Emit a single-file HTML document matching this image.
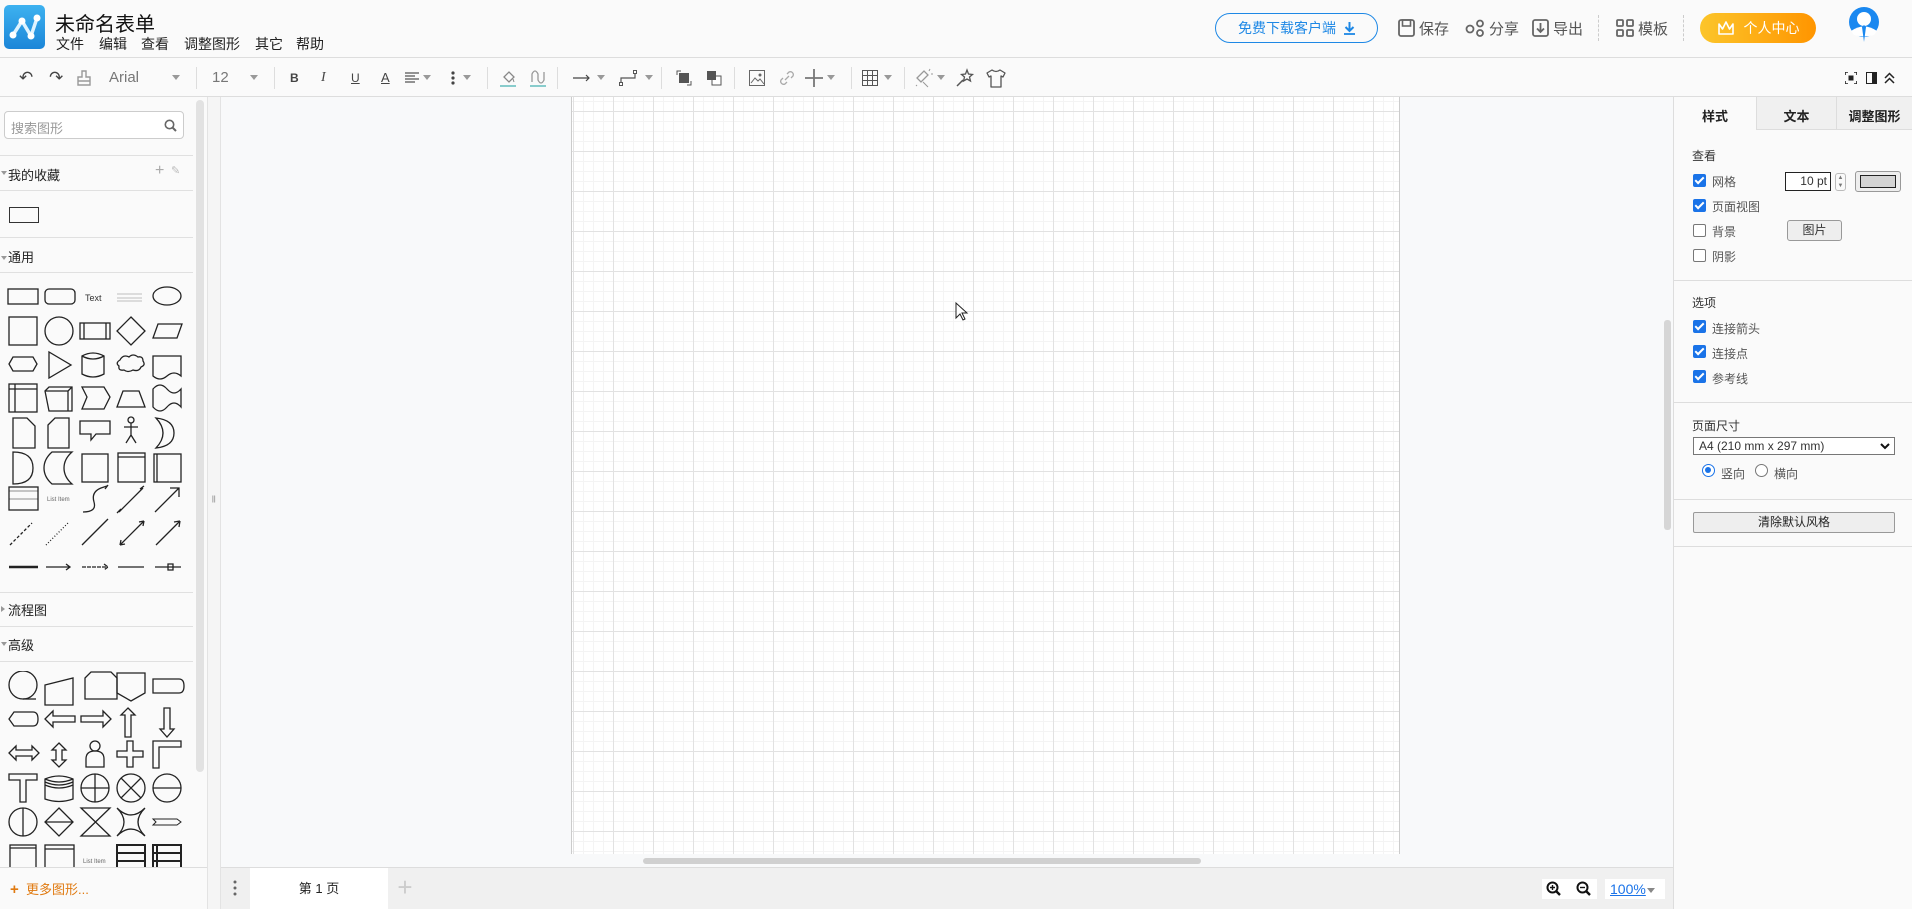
<!DOCTYPE html>
<html><head><meta charset="utf-8">
<style>
*{box-sizing:border-box;margin:0;padding:0}
body{width:1912px;height:909px;overflow:hidden;position:relative;background:#fafafa;font-family:"Liberation Sans","Noto Sans CJK SC",sans-serif;color:#333;font-size:13px}
.a{position:absolute}
.hdr{left:0;top:0;width:1912px;height:58px;background:#fafafa;border-bottom:1px solid #ddd}
.tb{left:0;top:58px;width:1912px;height:39px;background:#fafafa;border-bottom:1px solid #ddd}
.sep{position:absolute;top:9px;width:1px;height:22px;background:#ddd}
.ti{position:absolute;top:0;height:39px;display:flex;align-items:center;color:#555}
.dd{width:0;height:0;border-left:4px solid transparent;border-right:4px solid transparent;border-top:5px solid #999;display:inline-block}
.menu span{position:absolute;top:34px;font-size:14px;color:#222}
.hb{position:absolute;top:13px;font-size:15px;color:#555;display:flex;align-items:center;gap:4px;height:30px}
.cb{position:absolute;left:1693px;width:13px;height:13px;border-radius:2px}
.cb.on{background:#1a73e8}
.cb.on:after{content:"";position:absolute;left:4px;top:1px;width:3px;height:7px;border:solid #fff;border-width:0 2px 2px 0;transform:rotate(45deg)}
.cb.off{border:1px solid #777;background:#fff}
.lb{position:absolute;left:1712px;font-size:12px;color:#555}
.rh{position:absolute;left:1692px;font-size:12px;color:#333}
.rl{position:absolute;left:1674px;width:238px;height:1px;background:#ddd}
.sh{position:absolute;left:0;width:207px;height:1px;background:#e0e0e0}
.sec{position:absolute;left:8px;font-size:13px;color:#222}
.tri{position:absolute;left:1px;width:0;height:0;border-left:3px solid transparent;border-right:3px solid transparent;border-top:4px solid #999}
</style></head><body>

<!-- header -->
<div class="a hdr">
 <div class="a" style="left:4px;top:5px;width:41px;height:44px;border-radius:5px;background:linear-gradient(#3db2f0,#1c86d8)">
  <svg width="41" height="44" viewBox="0 0 41 44"><path d="M9 30 L18 16 L27 31 L33 13" stroke="#dff3ff" stroke-width="3.5" fill="none" stroke-linejoin="round"/><circle cx="9" cy="30" r="3.5" fill="#fff"/><circle cx="18" cy="16" r="3.5" fill="#fff"/><circle cx="27" cy="31" r="3.5" fill="#fff"/><circle cx="33" cy="13" r="3.5" fill="#fff"/></svg>
 </div>
 <div class="a" style="left:55px;top:8px;font-size:20px;color:#111">未命名表单</div>
 <div class="menu"><span style="left:56px">文件</span><span style="left:99px">编辑</span><span style="left:141px">查看</span><span style="left:184px">调整图形</span><span style="left:255px">其它</span><span style="left:296px">帮助</span></div>

 <div class="a" style="left:1215px;top:13px;width:163px;height:30px;border:1px solid #1e88e5;border-radius:15px;color:#1e88e5;font-size:14px;display:flex;align-items:center;justify-content:center;gap:8px">免费下载客户端 <svg width="11" height="13"><path d="M5.5 0v9M1.5 5l4 4 4-4" stroke="#1e88e5" stroke-width="2" fill="none"/><path d="M0 12h11" stroke="#1e88e5" stroke-width="1.8"/></svg></div>
 <div class="hb" style="left:1398px"><svg width="17" height="18"><rect x="1" y="1" width="15" height="16" rx="2" fill="none" stroke="#666" stroke-width="1.8"/><rect x="4.5" y="1" width="8" height="6" fill="none" stroke="#666" stroke-width="1.6"/></svg>保存</div>
 <div class="hb" style="left:1465px"><svg width="20" height="18"><circle cx="5" cy="10" r="3.5" fill="none" stroke="#666" stroke-width="1.8"/><circle cx="15" cy="4.5" r="3" fill="none" stroke="#666" stroke-width="1.8"/><circle cx="15" cy="14" r="3" fill="none" stroke="#666" stroke-width="1.8"/></svg>分享</div>
 <div class="hb" style="left:1532px"><svg width="17" height="18"><rect x="1" y="1" width="15" height="16" rx="2" fill="none" stroke="#666" stroke-width="1.8"/><path d="M8.5 4v9M5 9.5l3.5 3.5 3.5-3.5" stroke="#666" stroke-width="1.8" fill="none"/></svg>导出</div>
 <div class="a" style="left:1598px;top:15px;width:0;height:26px;border-left:1px dashed #ccc"></div>
 <div class="hb" style="left:1616px"><svg width="18" height="18"><rect x="1" y="1" width="6" height="6" rx="1" fill="none" stroke="#666" stroke-width="1.8"/><rect x="11" y="1" width="6" height="6" rx="1" fill="none" stroke="#666" stroke-width="1.8"/><rect x="1" y="11" width="6" height="6" rx="1" fill="none" stroke="#666" stroke-width="1.8"/><rect x="11" y="11" width="6" height="6" rx="1" fill="none" stroke="#666" stroke-width="1.8"/></svg>模板</div>
 <div class="a" style="left:1683px;top:15px;width:0;height:26px;border-left:1px dashed #ccc"></div>
 <div class="a" style="left:1700px;top:13px;width:116px;height:30px;border-radius:15px;background:linear-gradient(90deg,#fcc52a,#ff9500);color:#fff;font-size:14px;display:flex;align-items:center;justify-content:center;gap:9px"><svg width="18" height="16"><path d="M2 4l3.5 5 3.5-7 3.5 7 3.5-5v10H2z" fill="none" stroke="#fff" stroke-width="1.6" stroke-linejoin="round"/></svg>个人中心</div>
 <svg class="a" style="left:1847px;top:7px" width="34" height="36"><circle cx="17" cy="15" r="15" fill="#1a88f0"/><circle cx="17" cy="12" r="7" fill="#fff"/><path d="M4 24 Q17 15 30 24 L27 28 Q17 31 7 28Z" fill="#fff"/><path d="M17 18 l2 2 -2 15 -2-15z" fill="#1a88f0"/></svg>
</div>

<!-- toolbar -->
<div class="a tb">
 <div class="ti" style="left:19px;font-size:17px;color:#444">↶</div>
 <div class="ti" style="left:49px;font-size:17px;color:#444">↷</div>
 <div class="ti" style="left:76px"><svg width="16" height="18"><path d="M6 2h4v6h4v8H2V8h4z M2 12h12" fill="none" stroke="#999" stroke-width="1.4"/></svg></div>
 <div class="ti" style="left:109px;font-size:15px;color:#777">Arial</div>
 <div class="ti" style="left:172px"><span class="dd"></span></div>
 <div class="sep" style="left:196px"></div>
 <div class="ti" style="left:212px;font-size:15px;color:#777">12</div>
 <div class="ti" style="left:250px"><span class="dd"></span></div>
 <div class="sep" style="left:274px"></div>
 <div class="ti" style="left:290px;font-weight:bold;font-size:12px;color:#444">B</div>
 <div class="ti" style="left:321px;font-style:italic;font-family:'Liberation Serif';font-size:14px;color:#444">I</div>
 <div class="ti" style="left:351px;text-decoration:underline;font-size:12px;color:#444">U</div>
 <div class="ti" style="left:381px;text-decoration:underline;font-size:13px;color:#444">A</div>
 <div class="ti" style="left:405px;gap:4px"><svg width="14" height="12"><path d="M0 1h14M0 4h10M0 7h14M0 10h10" stroke="#555" stroke-width="1.3"/></svg><span class="dd"></span></div>
 <div class="ti" style="left:451px;gap:8px"><svg width="4" height="14"><circle cx="2" cy="2" r="1.6" fill="#444"/><circle cx="2" cy="7" r="1.6" fill="#444"/><circle cx="2" cy="12" r="1.6" fill="#444"/></svg><span class="dd"></span></div>
 <div class="sep" style="left:487px"></div>
 <div class="ti" style="left:500px"><svg width="16" height="20"><path d="M4 9l5-5 5 5-5 5z" fill="none" stroke="#888" stroke-width="1.3"/><path d="M13 11l1 3" stroke="#888"/><rect x="0" y="17" width="16" height="2" fill="#8cc"/></svg></div>
 <div class="ti" style="left:530px"><svg width="16" height="20"><path d="M2 14V6q3-6 6 0v6q3 6 6 0V4" fill="none" stroke="#999" stroke-width="1.3"/><rect x="0" y="17" width="16" height="2" fill="#8cc"/></svg></div>
 <div class="sep" style="left:557px"></div>
 <div class="ti" style="left:573px;gap:6px"><svg width="18" height="8"><path d="M0 4h16M13 1l3 3-3 3" stroke="#444" stroke-width="1.2" fill="none"/></svg><span class="dd"></span></div>
 <div class="ti" style="left:619px;gap:6px"><svg width="20" height="16"><path d="M2 14V8h14V2" stroke="#555" stroke-width="1.2" fill="none"/><rect x="0.5" y="12.5" width="3" height="3" fill="#fff" stroke="#555"/><rect x="14.5" y="0.5" width="3" height="3" fill="#fff" stroke="#555"/></svg><span class="dd"></span></div>
 <div class="sep" style="left:661px"></div>
 <div class="ti" style="left:676px"><svg width="16" height="16"><path d="M1 5V1h4M11 15h4v-4" stroke="#555" fill="none"/><rect x="3" y="3" width="10" height="10" fill="#555"/></svg></div>
 <div class="ti" style="left:706px"><svg width="16" height="16"><rect x="1" y="1" width="9" height="9" fill="#555"/><rect x="6" y="6" width="9" height="9" fill="#fff" stroke="#555"/><rect x="6" y="6" width="4" height="4" fill="#555"/></svg></div>
 <div class="sep" style="left:734px"></div>
 <div class="ti" style="left:749px"><svg width="16" height="16"><rect x="0.5" y="0.5" width="15" height="15" fill="none" stroke="#666"/><path d="M2 13l4-5 3 3 2-2 4 5" stroke="#666" fill="none"/><circle cx="11" cy="5" r="1.5" fill="#666"/></svg></div>
 <div class="ti" style="left:779px"><svg width="16" height="16"><path d="M6 10l4-4M4 8l-2 2a3 3 0 0 0 4 4l2-2M12 8l2-2a3 3 0 0 0-4-4L8 4" stroke="#aaa" stroke-width="1.3" fill="none"/></svg></div>
 <div class="ti" style="left:805px;gap:4px"><svg width="18" height="18"><path d="M9 0v18M0 9h18" stroke="#777" stroke-width="1.8"/></svg><span class="dd"></span></div>
 <div class="sep" style="left:851px"></div>
 <div class="ti" style="left:862px;gap:6px"><svg width="16" height="16"><rect x="0.5" y="0.5" width="15" height="15" fill="none" stroke="#555"/><path d="M5.5 0v16M10.5 0v16M0 5.5h16M0 10.5h16" stroke="#555"/></svg><span class="dd"></span></div>
 <div class="sep" style="left:904px"></div>
 <div class="ti" style="left:914px;gap:3px"><svg width="20" height="20"><path d="M3 10l7-7 4 4-7 7z" fill="none" stroke="#999" stroke-width="1.3"/><path d="M9 14l5 5M15 3l1-2M17 6h2M2 17l1 1" stroke="#999"/></svg><span class="dd"></span></div>
 <div class="ti" style="left:955px"><svg width="20" height="20"><path d="M12 2l1.5 4 4 .5-3 2.5 1 4-3.5-2-3.5 2 1-4-3-2.5 4-.5z" fill="none" stroke="#555" stroke-width="1.3"/><path d="M8 12l-6 6" stroke="#555" stroke-width="1.5"/></svg></div>
 <div class="ti" style="left:986px"><svg width="20" height="20"><path d="M6 2l-5 3 2 4 2-1v11h10V8l2 1 2-4-5-3q-4 3-8 0z" fill="none" stroke="#555" stroke-width="1.3" stroke-linejoin="round"/></svg></div>
 <div class="ti" style="left:1845px"><svg width="12" height="12"><path d="M0 3V0h3M9 0h3v3M12 9v3H9M3 12H0V9" stroke="#222" stroke-width="1.6" fill="none"/><rect x="3.5" y="3.5" width="5" height="5" fill="#222"/></svg></div>
 <div class="ti" style="left:1866px"><svg width="11" height="12"><rect x="0.5" y="0.5" width="10" height="11" fill="none" stroke="#222"/><rect x="6" y="1" width="4" height="10" fill="#222"/></svg></div>
 <div class="ti" style="left:1884px"><svg width="11" height="12"><path d="M1 6l4.5-4.5L10 6M1 11l4.5-4.5L10 11" stroke="#222" stroke-width="1.5" fill="none"/></svg></div>
</div>

<!-- left panel -->
<div class="a" style="left:0;top:97px;width:207px;height:770px;background:#fafafa"></div>
<div class="a" style="left:207px;top:97px;width:14px;height:812px;background:#f5f5f5;border-left:1px solid #e3e3e3;border-right:1px solid #e3e3e3"></div>
<div class="a" style="left:196px;top:100px;width:8px;height:672px;background:#e2e2e2;border-radius:4px"></div>
<div class="a" style="left:212px;top:496px;font-size:7px;color:#666">||</div>
<div class="a" style="left:4px;top:111px;width:180px;height:28px;border:1px solid #ccc;border-radius:4px;background:#fff;font-size:13px;color:#999;padding:6px 0 0 6px">搜索图形
 <svg class="a" style="right:6px;top:7px" width="13" height="13"><circle cx="5.5" cy="5.5" r="4.2" fill="none" stroke="#666" stroke-width="1.6"/><path d="M8.5 8.5l3.5 3.5" stroke="#666" stroke-width="2"/></svg></div>
<div class="sh" style="top:155px;width:193px"></div>
<div class="tri" style="top:171px"></div><div class="sec" style="top:165px">我的收藏</div>
<div class="a" style="left:155px;top:162px;font-size:16px;color:#aaa">+</div>
<div class="a" style="left:171px;top:164px;font-size:11px;color:#bbb">✎</div>
<div class="sh" style="top:190px;width:193px"></div>
<div class="a" style="left:9px;top:207px;width:30px;height:16px;border:1.5px solid #333"></div>
<div class="sh" style="top:237px;width:193px"></div>
<div class="tri" style="top:256px"></div><div class="sec" style="top:247px">通用</div>
<div class="sh" style="top:272px;width:193px"></div>

<svg class="a" style="left:0;top:280px" width="195" height="300" fill="none" stroke="#222" stroke-width="1.3">
 <rect x="8" y="9" width="30" height="15"/><rect x="45" y="9" width="30" height="15" rx="4"/>
 <text x="85" y="21" font-size="9" fill="#333" stroke="none" font-family="Liberation Sans">Text</text>
 <path d="M117 14h25M117 18h25M117 21h25" stroke="#aaa" stroke-width="0.8"/><ellipse cx="167" cy="16" rx="14" ry="9"/>
 <g transform="translate(0,-5)">
 <rect x="9" y="42" width="28" height="28"/><circle cx="59" cy="56" r="14"/><rect x="80" y="48" width="30" height="16"/><path d="M84 48v16M106 48v16"/><path d="M131 42l14 14-14 14-14-14z"/><path d="M158 49h24l-5 14h-24z"/>
 </g>
 <path d="M9 84l4-7h20l4 7-4 7H13z"/><path d="M49 72v26l22-13z"/><path d="M82 76q11-6 22 0v18q-11 6-22 0zM82 76q11 6 22 0"/><path d="M120 80q3-6 9-3q4-4 9 0q5-1 5 4q3 4-2 6q-2 5-8 3q-5 3-9 0q-6 1-5-4q-4-3 1-6z"/><path d="M153 76h28v20q-7-6-14 0t-14 0z"/>
 <g transform="translate(0,3)">
 <rect x="9" y="101" width="28" height="28"/><path d="M9 106h28M15 101v28"/><path d="M45 108l4-4h23v24H49z"/><path d="M45 108h23v20M68 108l4-4"/><path d="M82 104h22l6 10-6 12H82l5-12z"/><path d="M117 124l6-16h16l6 16z"/><path d="M153 106q7-8 14 0t14 0v18q-7-8-14 0t-14 0z"/>
 </g>
 <path d="M13 138h14l8 8v22H13z"/><path d="M48 145l7-7h14v30H48z"/><path d="M80 141h30v13H96l-5 6v-6H80z"/><circle cx="131" cy="140" r="3"/><path d="M131 143v12M124 147h14M131 155l-5 8M131 155l5 8"/><path d="M156 138q14 15 0 30q18-2 18-15t-18-15z"/>
 <path d="M13 172q20 0 20 16t-20 16z"/><path d="M52 172h20q-8 7-8 16t8 16H52q-8-7-8-16t8-16z"/><rect x="82" y="174" width="26" height="28"/><rect x="118" y="173" width="27" height="29"/><path d="M118 177h27"/><rect x="154" y="174" width="27" height="28"/><path d="M157 174v28"/>
 <g transform="translate(0,-4)">
 <rect x="9" y="211" width="29" height="23"/><path d="M9 215h29M9 223h29" stroke-width="0.6"/>
 <text x="47" y="225" font-size="6" fill="#666" stroke="none" font-family="Liberation Sans">List Item</text>
 <path d="M83 236q14 0 11-10t7-14l6-2" /><path d="M108 209l-3 4" />
 <path d="M119 236l24-24M121 233l-4 4M140 213l4-3"/><path d="M155 236l24-24M170 212h9v9"/>
 </g>
 <g transform="translate(0,-5)">
 <path d="M10 270l22-22" stroke-dasharray="3 2"/><path d="M46 270l22-22" stroke-dasharray="1 2"/><path d="M82 270l26-26"/><path d="M120 270l24-24M120 270l5-1M120 270l1-5M144 246l-5 1M144 246l-1 5"/><path d="M156 270l24-24M180 246l-6 1M180 246l-1 6"/>
 </g>
 <g transform="translate(0,-8)">
 <path d="M9 295h29" stroke-width="2.5"/><path d="M46 295h24M66 292l4 3-4 3"/><path d="M82 295h26M104 292l4 3-4 3" stroke-dasharray="4 1"/><path d="M118 295h26"/><path d="M155 295h26M168 292h5v6h-5z"/>
 </g>
</svg>

<div class="sh" style="top:592px;width:193px"></div>
<div class="a" style="left:1px;top:606px;width:0;height:0;border-top:3px solid transparent;border-bottom:3px solid transparent;border-left:4px solid #999"></div>
<div class="sec" style="top:600px">流程图</div>
<div class="sh" style="top:626px;width:193px"></div>
<div class="tri" style="top:642px"></div><div class="sec" style="top:635px">高级</div>
<div class="sh" style="top:661px;width:193px"></div>

<svg class="a" style="left:0;top:671px" width="195" height="196" fill="none" stroke="#222" stroke-width="1.3">
 <circle cx="23" cy="14" r="14"/><path d="M23 28h13"/><path d="M45 14l28-7v27H45z"/><path d="M85 7l6-6h20l6 6v21H85z"/><path d="M117 2h28v20l-14 8-14-8z"/><path d="M153 8h26q5 0 5 7t-5 7h-26z"/>
 <path d="M9 48l5-7h19q5 0 5 7t-5 7H14z"/><path d="M45 48l8-8v5h22v6H53v5z"/><path d="M81 45h22v-5l8 8-8 8v-5H81z"/><path d="M128 37l7 7h-4v22h-6V44h-4z"/><path d="M164 37h6v21h4l-7 8-7-8h4z"/>
 <path d="M9 82l7-7v4h16v-4l7 7-7 7v-4H16v4z"/><path d="M59 72l7 7h-4v10h4l-7 7-7-7h4V79h-4z"/><circle cx="95" cy="75" r="5"/><path d="M86 96v-8q0-8 9-8t9 8v8z"/><path d="M127 70h6v10h10v6h-10v10h-6V86h-10v-6h10z"/><path d="M153 70h28v6h-22v21h-6z"/>
 <path d="M9 103h28v6H26v22h-6v-22H9z"/><path d="M45 108q14-6 28 0v20q-14 5-28 0zM45 108q14 6 28 0M45 111q14 6 28 0M45 114q14 6 28 0"/><circle cx="95" cy="117" r="14"/><path d="M81 117h28M95 103v28"/><circle cx="131" cy="117" r="14"/><path d="M121 107l20 20M141 107l-20 20"/><circle cx="167" cy="117" r="14"/><path d="M153 117h28"/>
 <circle cx="23" cy="151" r="14"/><path d="M23 137v28"/><path d="M59 137l14 14-14 14-14-14zM45 151h28"/><path d="M81 137h29L81 165h29z"/><path d="M117 137q14 14 28 0q-14 14 0 28q-14-14-28 0q14-14 0-28z"/><path d="M153 148h24l4 3-4 3h-24l3-3z" stroke-width="1"/>
 <rect x="10" y="174" width="26" height="30"/><path d="M10 177h26"/><rect x="45" y="174" width="29" height="28"/><path d="M45 178h29"/>
 <text x="83" y="192" font-size="6" fill="#666" stroke="none" font-family="Liberation Sans">List Item</text>
 <rect x="117" y="174" width="28" height="25" stroke-width="2"/><path d="M117 182h28M117 190h28" stroke-width="2"/><rect x="153" y="174" width="28" height="25" stroke-width="2"/><path d="M153 182h28M153 190h28M157 174v25" stroke-width="2"/>
</svg>

<div class="a" style="left:0;top:867px;width:207px;height:42px;background:#fafafa;border-top:1px solid #ddd"></div>
<div class="a" style="left:10px;top:879px;font-size:13px;color:#e07a10"><b style="font-size:15px">+</b>&nbsp; 更多图形...</div>

<!-- canvas -->
<div class="a" style="left:221px;top:97px;width:1452px;height:770px;background:#f8f9fa"></div>
<div class="a" style="left:571px;top:97px;width:829px;height:757px;background-color:#fff;border-left:1px solid #ccc;border-right:1px solid #ccc;
background-image:linear-gradient(#e2e2e2 1px,transparent 1px),linear-gradient(90deg,#e2e2e2 1px,transparent 1px),linear-gradient(#f4f4f4 1px,transparent 1px),linear-gradient(90deg,#f4f4f4 1px,transparent 1px);
background-size:40px 40px,40px 40px,10px 10px,10px 10px;background-position:0 14px,1px 0,0 4px,1px 0"></div>
<svg class="a" style="left:955px;top:302px" width="14" height="20"><path d="M1 1v15l4-4 3 6 2-1-3-6h5z" fill="#fff" stroke="#222"/></svg>
<div class="a" style="left:1664px;top:320px;width:7px;height:210px;background:#d6d6d6;border-radius:3px"></div>
<div class="a" style="left:643px;top:858px;width:558px;height:6px;background:#d0d0d0;border-radius:3px"></div>
<div class="a" style="left:221px;top:867px;width:1452px;height:42px;background:#f0f0f0;border-top:1px solid #ddd"></div>
<svg class="a" style="left:233px;top:880px" width="4" height="16"><circle cx="2" cy="2" r="1.5" fill="#666"/><circle cx="2" cy="8" r="1.5" fill="#666"/><circle cx="2" cy="14" r="1.5" fill="#666"/></svg>
<div class="a" style="left:250px;top:868px;width:138px;height:41px;background:#fff;font-size:13px;color:#222;text-align:center;line-height:41px">第 1 页</div>
<div class="a" style="left:392px;top:868px;width:26px;height:41px;font-size:26px;color:#ccc;text-align:center;line-height:38px">+</div>
<div class="a" style="left:1542px;top:879px;width:55px;height:20px;background:#fff"></div>
<svg class="a" style="left:1546px;top:881px" width="16" height="16"><circle cx="6.5" cy="6.5" r="5" fill="none" stroke="#111" stroke-width="2"/><path d="M10 10l4 4" stroke="#111" stroke-width="2.4"/><path d="M6.5 4v5M4 6.5h5" stroke="#111" stroke-width="1.4"/></svg>
<svg class="a" style="left:1576px;top:881px" width="16" height="16"><circle cx="6.5" cy="6.5" r="5" fill="none" stroke="#111" stroke-width="2"/><path d="M10 10l4 4" stroke="#111" stroke-width="2.4"/><path d="M4 6.5h5" stroke="#111" stroke-width="1.4"/></svg>
<div class="a" style="left:1605px;top:879px;width:60px;height:20px;background:#fff;font-size:14px;color:#1a73e8;padding-left:5px;line-height:20px"><u>100%</u><span class="dd" style="border-top-color:#888;margin-left:1px;vertical-align:middle"></span></div>

<!-- right panel -->
<div class="a" style="left:1673px;top:97px;width:239px;height:812px;background:#fafafa;border-left:1px solid #ddd"></div>
<div class="a" style="left:1756px;top:97px;width:156px;height:33px;background:#f0f0f0;border-bottom:1px solid #ddd"></div>
<div class="a" style="left:1756px;top:97px;width:1px;height:33px;background:#ddd"></div>
<div class="a" style="left:1836px;top:97px;width:1px;height:33px;background:#ddd"></div>
<div class="a" style="left:1674px;top:106px;width:82px;text-align:center;font-size:13px;font-weight:bold;color:#222">样式</div>
<div class="a" style="left:1757px;top:106px;width:79px;text-align:center;font-size:13px;font-weight:bold;color:#222">文本</div>
<div class="a" style="left:1837px;top:106px;width:75px;text-align:center;font-size:13px;font-weight:bold;color:#222">调整图形</div>
<div class="rh" style="top:147px">查看</div>
<div class="cb on" style="top:174px"></div><div class="lb" style="top:173px">网格</div>
<div class="a" style="left:1785px;top:172px;width:46px;height:19px;border:1.5px solid #222;background:#fff;font-size:12px;text-align:right;padding-right:3px;line-height:16px">10 pt</div>
<div class="a" style="left:1835px;top:173px;width:11px;height:18px;border:1px solid #bbb;border-radius:3px;font-size:6px;color:#777;text-align:center;line-height:8px">▲<br>▼</div>
<div class="a" style="left:1855px;top:171px;width:46px;height:21px;border:1px solid #999;border-radius:3px;background:#eee;padding:3px 4px"><div style="width:100%;height:100%;border:1px solid #222;background:#d4d4d4"></div></div>
<div class="cb on" style="top:199px"></div><div class="lb" style="top:198px">页面视图</div>
<div class="cb off" style="top:224px"></div><div class="lb" style="top:223px">背景</div>
<div class="a" style="left:1787px;top:220px;width:55px;height:21px;border:1px solid #999;border-radius:3px;background:#eee;font-size:12px;text-align:center;line-height:19px">图片</div>
<div class="cb off" style="top:249px"></div><div class="lb" style="top:248px">阴影</div>
<div class="rl" style="top:280px"></div>
<div class="rh" style="top:294px">选项</div>
<div class="cb on" style="top:320px"></div><div class="lb" style="top:320px">连接箭头</div>
<div class="cb on" style="top:345px"></div><div class="lb" style="top:345px">连接点</div>
<div class="cb on" style="top:370px"></div><div class="lb" style="top:370px">参考线</div>
<div class="rl" style="top:402px"></div>
<div class="rh" style="top:417px">页面尺寸</div>
<div class="a" style="left:1693px;top:437px;width:202px;height:18px;border:1px solid #777;background:#fff;font-size:12px;padding-left:5px;line-height:16px">A4 (210 mm x 297 mm)<svg class="a" style="right:4px;top:5px" width="10" height="7"><path d="M1 1l4 4 4-4" stroke="#111" stroke-width="2" fill="none"/></svg></div>
<div class="a" style="left:1702px;top:464px;width:13px;height:13px;border-radius:50%;border:1.5px solid #1a73e8;background:#fff"><div style="margin:2px;width:6px;height:6px;border-radius:50%;background:#1a73e8"></div></div>
<div class="a" style="left:1721px;top:465px;font-size:12px;color:#555">竖向</div>
<div class="a" style="left:1755px;top:464px;width:13px;height:13px;border-radius:50%;border:1px solid #777;background:#fff"></div>
<div class="a" style="left:1774px;top:465px;font-size:12px;color:#555">横向</div>
<div class="rl" style="top:499px"></div>
<div class="a" style="left:1693px;top:512px;width:202px;height:21px;border:1px solid #999;border-radius:2px;background:#eee;font-size:12px;text-align:center;line-height:19px;color:#222">清除默认风格</div>
<div class="rl" style="top:546px"></div>
</body></html>
